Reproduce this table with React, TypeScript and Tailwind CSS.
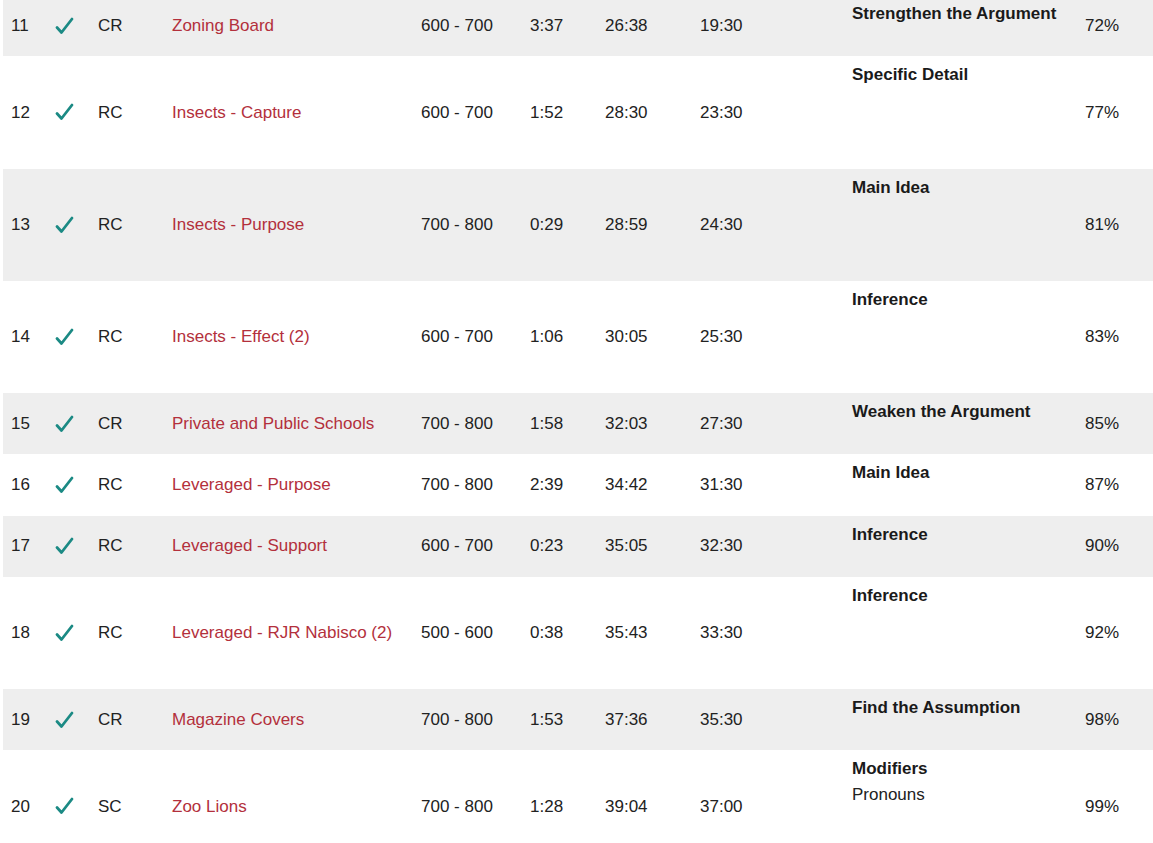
import React from 'react';

interface Row {
  n: number;
  type: string;
  title: string;
  diff: string;
  time: string;
  elapsed: string;
  target: string;
  topic: string;
  sub?: string;
  pct: string;
  tall?: boolean;
}

const rows: Row[] = [
  { n: 11, type: 'CR', title: 'Zoning Board', diff: '600 - 700', time: '3:37', elapsed: '26:38', target: '19:30', topic: 'Strengthen the Argument', pct: '72%' },
  { n: 12, type: 'RC', title: 'Insects - Capture', diff: '600 - 700', time: '1:52', elapsed: '28:30', target: '23:30', topic: 'Specific Detail', pct: '77%', tall: true },
  { n: 13, type: 'RC', title: 'Insects - Purpose', diff: '700 - 800', time: '0:29', elapsed: '28:59', target: '24:30', topic: 'Main Idea', pct: '81%', tall: true },
  { n: 14, type: 'RC', title: 'Insects - Effect (2)', diff: '600 - 700', time: '1:06', elapsed: '30:05', target: '25:30', topic: 'Inference', pct: '83%', tall: true },
  { n: 15, type: 'CR', title: 'Private and Public Schools', diff: '700 - 800', time: '1:58', elapsed: '32:03', target: '27:30', topic: 'Weaken the Argument', pct: '85%' },
  { n: 16, type: 'RC', title: 'Leveraged - Purpose', diff: '700 - 800', time: '2:39', elapsed: '34:42', target: '31:30', topic: 'Main Idea', pct: '87%' },
  { n: 17, type: 'RC', title: 'Leveraged - Support', diff: '600 - 700', time: '0:23', elapsed: '35:05', target: '32:30', topic: 'Inference', pct: '90%' },
  { n: 18, type: 'RC', title: 'Leveraged - RJR Nabisco (2)', diff: '500 - 600', time: '0:38', elapsed: '35:43', target: '33:30', topic: 'Inference', pct: '92%', tall: true },
  { n: 19, type: 'CR', title: 'Magazine Covers', diff: '700 - 800', time: '1:53', elapsed: '37:36', target: '35:30', topic: 'Find the Assumption', pct: '98%' },
  { n: 20, type: 'SC', title: 'Zoo Lions', diff: '700 - 800', time: '1:28', elapsed: '39:04', target: '37:00', topic: 'Modifiers', sub: 'Pronouns', pct: '99%', tall: true },
];

function Check() {
  return (
    <svg width="22" height="22" viewBox="0 0 22 22" className="block">
      <path d="M4 12.5 L8.5 17.5 L19 4" fill="none" stroke="#1b8a84" strokeWidth="2.8" strokeLinecap="round" strokeLinejoin="round" />
    </svg>
  );
}

export default function App() {
  return (
    <div className="min-h-screen overflow-hidden bg-white pl-[3px] font-['Liberation_Sans',Arial,sans-serif] text-[17px] text-[#222]">
      <table className="-mt-[5px] w-[1150px] table-fixed border-collapse">
        <colgroup>
          <col className="w-[44px]" />
          <col className="w-[43px]" />
          <col className="w-[74px]" />
          <col className="w-[249px]" />
          <col className="w-[109px]" />
          <col className="w-[75px]" />
          <col className="w-[95px]" />
          <col className="w-[152px]" />
          <col className="w-[233px]" />
          <col className="w-[76px]" />
        </colgroup>
        <tbody>
          {rows.map((r, i) => (
            <tr key={r.n} className={`${i % 2 === 0 ? 'bg-[#eeeeee]' : 'bg-white'} ${r.tall ? 'h-[112.25px]' : 'h-[61.25px]'}`}>
              <td className="pl-2 align-middle">{r.n}</td>
              <td className="pl-[6px] align-middle">
                <Check />
              </td>
              <td className="pl-2 align-middle">{r.type}</td>
              <td className="pl-2 align-middle whitespace-nowrap text-[#b3303c]">{r.title}</td>
              <td className="pl-2 align-middle">{r.diff}</td>
              <td className="pl-2 align-middle">{r.time}</td>
              <td className="pl-2 align-middle">{r.elapsed}</td>
              <td className="pl-2 align-middle">{r.target}</td>
              <td className="pl-2 pt-[8px] align-top">
                <div className="font-bold leading-[22px] whitespace-nowrap text-[#1a1a1a]">{r.topic}</div>
                {r.sub && <div className="mt-[4px] leading-[22px]">{r.sub}</div>}
              </td>
              <td className="pl-2 align-middle">{r.pct}</td>
            </tr>
          ))}
        </tbody>
      </table>
    </div>
  );
}
